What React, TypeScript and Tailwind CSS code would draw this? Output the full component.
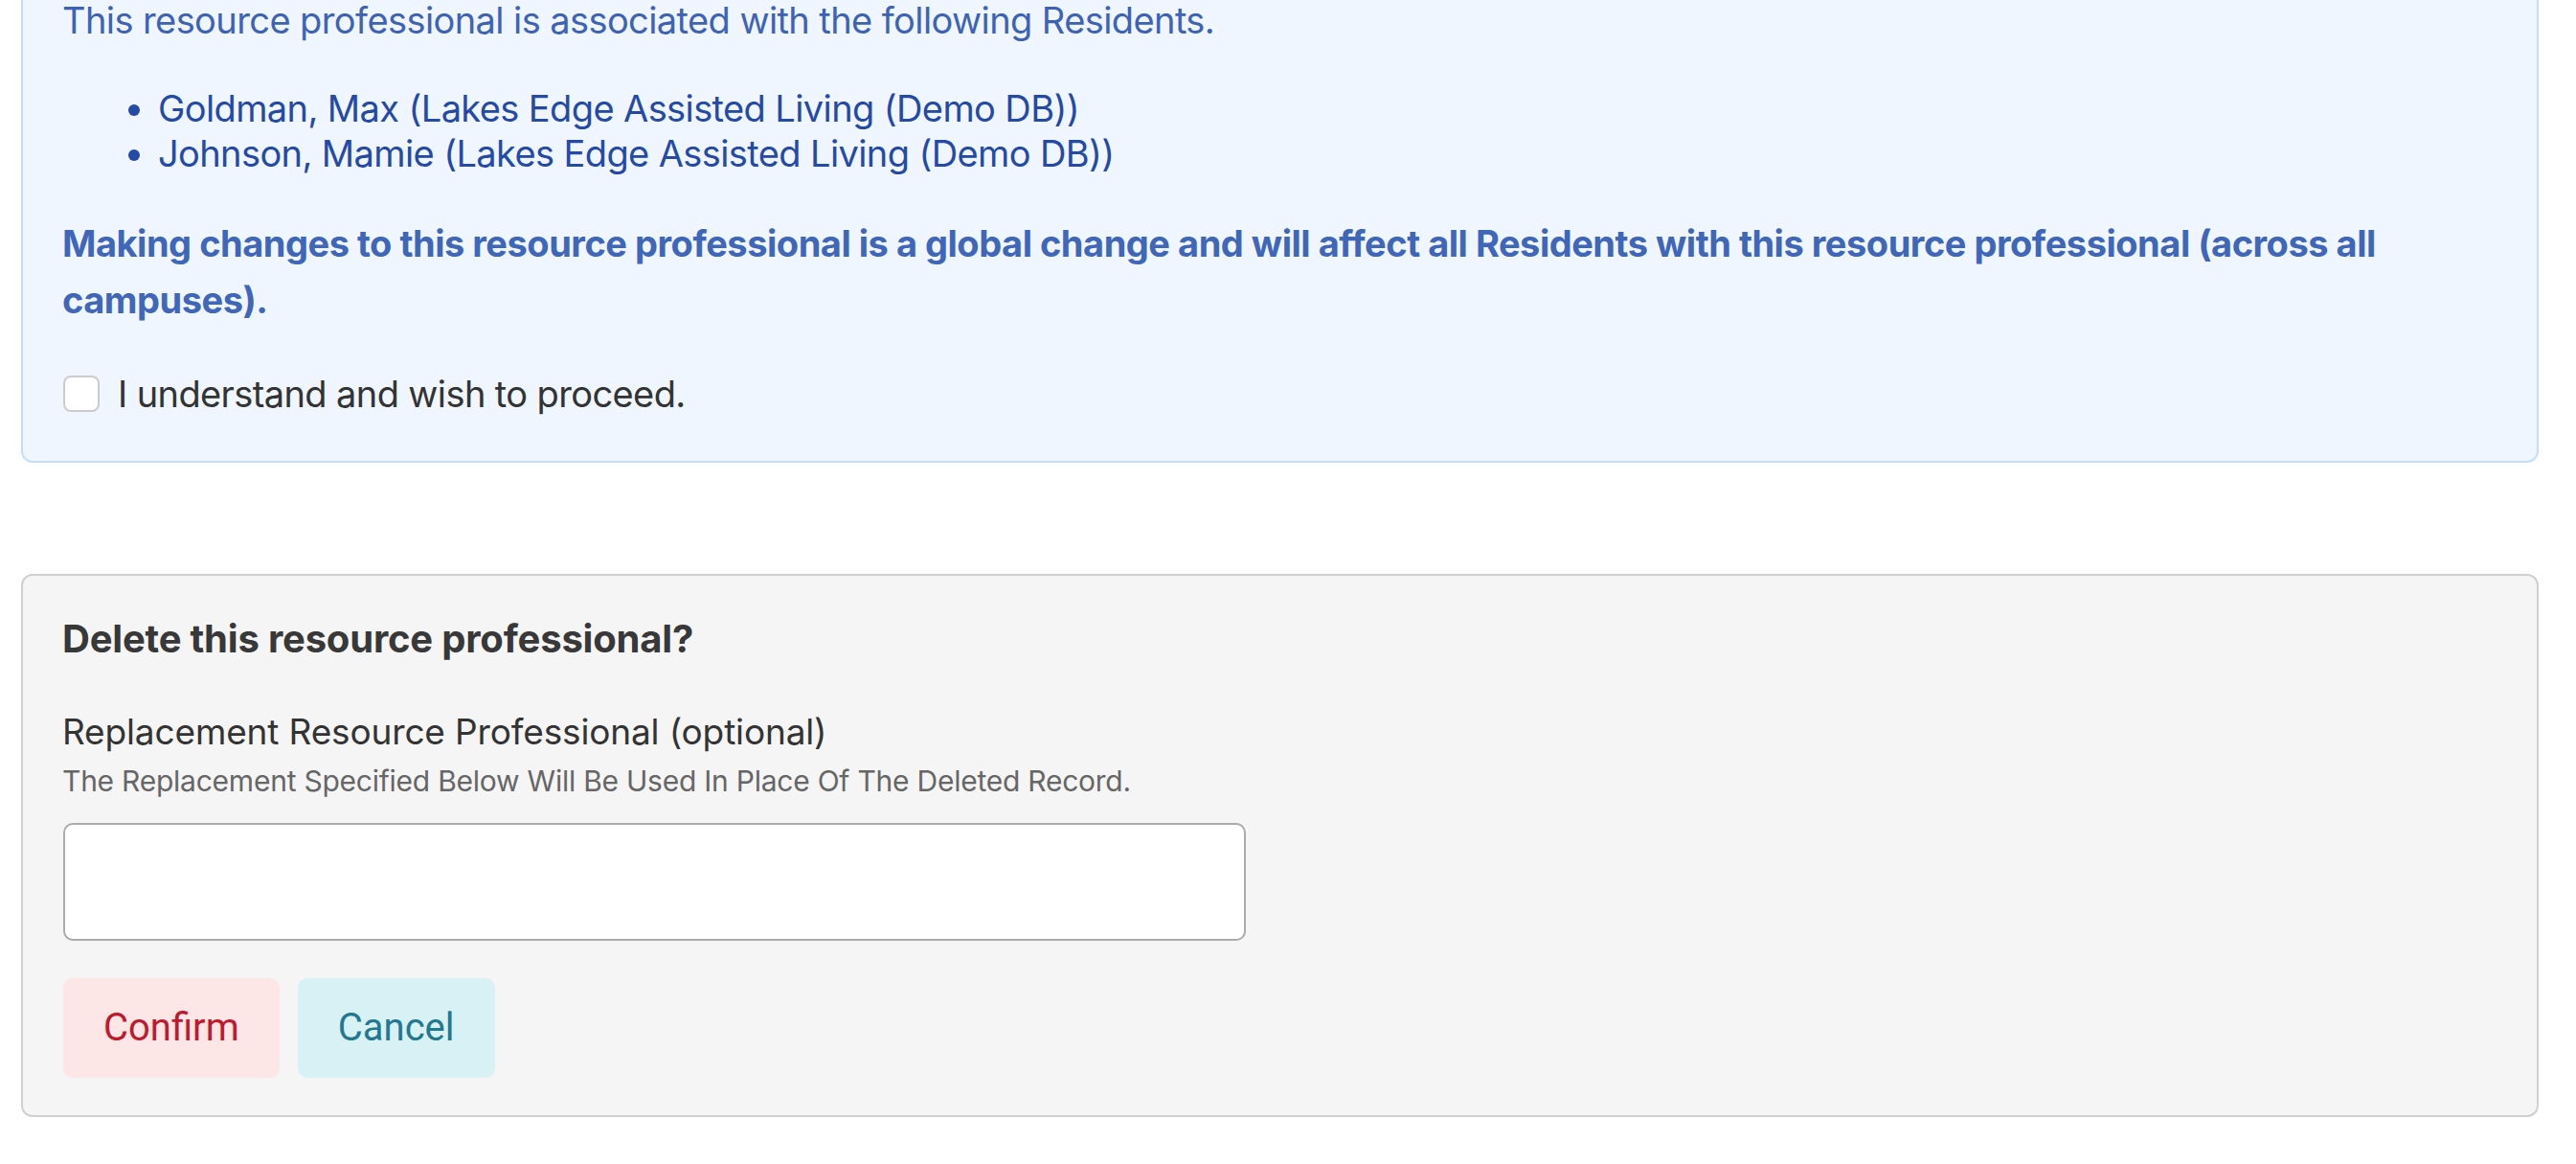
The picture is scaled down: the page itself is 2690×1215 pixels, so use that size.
import { useState } from 'react';

const residents = [
  'Goldman, Max (Lakes Edge Assisted Living (Demo DB))',
  'Johnson, Mamie (Lakes Edge Assisted Living (Demo DB))',
];

export default function App() {
  const [agreed, setAgreed] = useState(false);
  const [replacement, setReplacement] = useState('');

  return (
    <div className="min-h-[1215px] overflow-hidden bg-white pl-[22px] pr-[39px] font-[Inter,'Liberation_Sans',sans-serif]">
      <div className="-mt-[50px] rounded-[12px] border-2 border-[#c3defa] bg-[#eff6ff] pl-[41px] pr-[44px] pt-[48px] pb-[43px]">
        <p className="mb-[48px] text-[38px] leading-[42px] tracking-[-0.0155em] text-[#3e63b4]">
          This resource professional is associated with the following Residents.
        </p>
        <ul className="mb-[41px] list-disc pl-[100px] text-[38px] leading-[47px] tracking-[-0.016em] text-[#254aa6]">
          {residents.map((r) => (
            <li key={r}>{r}</li>
          ))}
        </ul>
        <p className="mb-[41px] text-[38px] font-bold leading-[59px] tracking-[-0.0125em] text-[#4066b8]">
          Making changes to this resource professional is a global change and will affect all Residents with this
          resource professional (across all campuses).
        </p>
        <label className="flex h-[54px] items-center gap-[19px] text-[38px] tracking-[-0.016em] text-[#333]">
          <input
            type="checkbox"
            checked={agreed}
            onChange={(e) => setAgreed(e.target.checked)}
            className="ml-[1px] h-[38px] w-[38px] appearance-none rounded-[8px] border-2 border-[#cccccc] bg-white checked:bg-[#3e63b4]"
          />
          I understand and wish to proceed.
        </label>
      </div>

      <div className="mt-[116px] rounded-[12px] border-2 border-[#d0d0d0] bg-[#f5f5f5] pl-[41px] pr-[44px] pt-[42px] pb-[39px]">
        <h2 className="text-[40px] font-bold leading-[48px] tracking-[-0.005em] text-[#383838]">
          Delete this resource professional?
        </h2>
        <div className="mt-[51px] text-[37px] leading-[44px] tracking-[-0.004em] text-[#333]">
          Replacement Resource Professional (optional)
        </div>
        <div className="mt-[11px] text-[30px] leading-[36px] tracking-[-0.008em] text-[#666]">
          The Replacement Specified Below Will Be Used In Place Of The Deleted Record.
        </div>
        <input
          value={replacement}
          onChange={(e) => setReplacement(e.target.value)}
          className="mt-[26px] ml-[1px] block h-[123px] w-[1235px] rounded-[10px] border-2 border-[#ababab] bg-white px-[20px] text-[34px] text-[#333] outline-none"
        />
        <div className="mt-[39px] ml-[1px] flex gap-[19px] font-[Roboto,sans-serif]">
          <button className="h-[104px] rounded-[10px] bg-[#fde6e6] px-[42px] text-[40px] text-[#bd1a2e]">Confirm</button>
          <button className="h-[104px] rounded-[10px] bg-[#d7f1f5] px-[42px] text-[40px] text-[#22788e]">Cancel</button>
        </div>
      </div>
    </div>
  );
}
